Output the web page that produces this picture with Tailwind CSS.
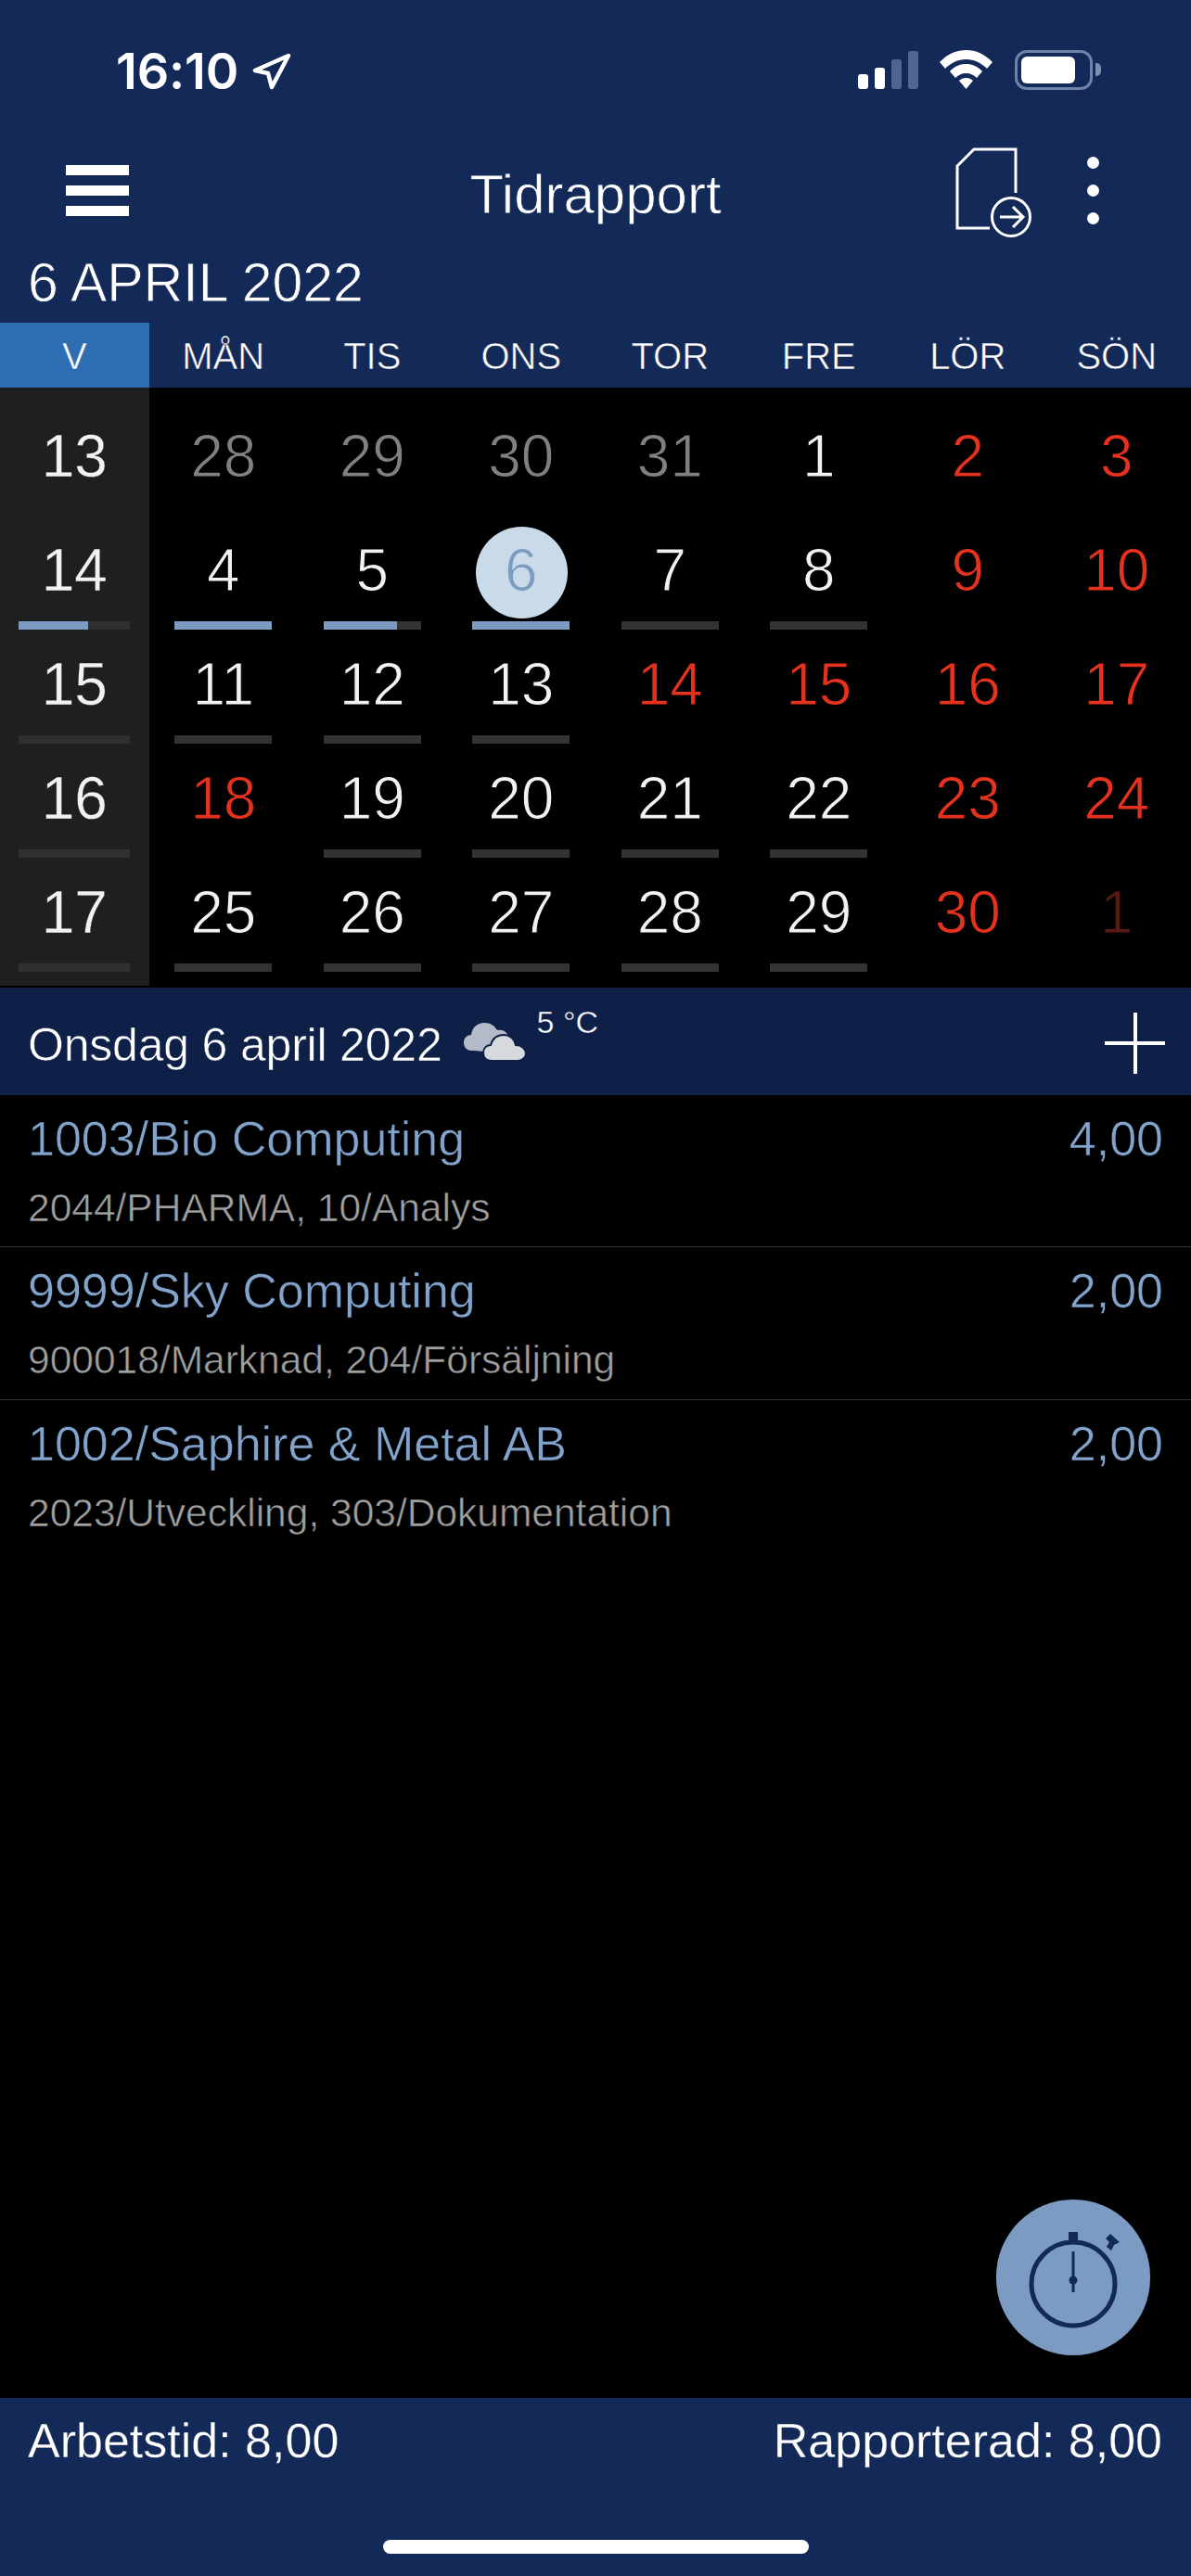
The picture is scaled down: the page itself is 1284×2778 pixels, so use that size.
<!DOCTYPE html>
<html lang="sv">
<head>
  <meta charset="UTF-8" />
  <title>Tidrapport</title>
  <meta name="viewport" content="width=device-width, initial-scale=1.0" />
  <script src="https://cdn.jsdelivr.net/npm/@tailwindcss/browser@4"></script>
</head>
<body class="bg-black text-white font-['Liberation_Sans',sans-serif]">
<div class="w-[1284px] h-[2778px] flex flex-col overflow-hidden">

  <!-- status bar -->
  <div class="bg-[#132958] h-[152px] flex items-start pt-[47px]">
    <span class="ml-[125px] w-[133px] font-['Inter',sans-serif] font-semibold text-[54px] leading-[60px] tracking-[-0.2px] whitespace-nowrap">16:10</span>
    <svg class="ml-[14px] mt-[10px] w-[42px] h-[40px]" viewBox="0 0 42 40" fill="none" stroke="#fff" stroke-width="4.5" stroke-linejoin="round"><path d="M39 3 L3 19 L17 22 L21 37 Z"/></svg>
    <div class="ml-auto mt-[8px] flex items-end gap-[7px] h-[41px]">
      <div class="w-[11px] h-[16px] rounded-[3px] bg-white"></div>
      <div class="w-[11px] h-[23px] rounded-[3px] bg-white"></div>
      <div class="w-[11px] h-[32px] rounded-[3px] bg-[#4f6790]"></div>
      <div class="w-[11px] h-[41px] rounded-[3px] bg-[#4f6790]"></div>
    </div>
    <svg class="ml-[23px] mt-[7px] w-[57px] h-[42px]" viewBox="0 0 57 42" fill="#fff"><path d="M28.500 0 C39 0 49 4.500 57 13 L51 20 C45 14 37.500 10 28.500 10 C19.500 10 12 14 6 20 L0 13 C8 4.500 18 0 28.500 0 Z"/><path d="M28.500 15 C35 15 41 17.500 46 23 L40 30 C37 27 33.500 25 28.500 25 C23.500 25 20 27 17 30 L11 23 C16 17.500 22 15 28.500 15 Z"/><path d="M28.500 30 C31.500 30 34 31 36 33 L28.500 42 L21 33 C23 31 25.500 30 28.500 30 Z"/></svg>
    <div class="ml-[24px] mt-[7px] w-[84px] h-[43px] rounded-[13px] border-[3px] border-[#6f83a6] p-[4px]">
      <div class="w-[58px] h-[29px] rounded-[6px] bg-white"></div>
    </div>
    <div class="ml-[3px] mr-[97px] mt-[21px] w-[6px] h-[14px] rounded-r-[5px] bg-[#7d90b0]"></div>
  </div>

  <!-- toolbar -->
  <div class="bg-[#132958] h-[116px] grid grid-cols-[1fr_auto_1fr]">
    <div class="pl-[71px] pt-[26px] flex flex-col gap-[11px]">
      <div class="w-[68px] h-[11px] bg-white"></div>
      <div class="w-[68px] h-[11px] bg-white"></div>
      <div class="w-[68px] h-[11px] bg-white"></div>
    </div>
    <div class="text-[60px] leading-[70px] pt-[23px] [-webkit-text-stroke:0.8px_#132958]">Tidrapport</div>
    <div class="flex justify-end">
      <svg class="mt-[7px] w-[84px] h-[98px]" viewBox="0 0 84 98" fill="none" stroke="#fff" stroke-width="3"><path d="M65 49 V2 H20 L2 20 V87 H37"/><circle cx="60" cy="75" r="20.500"/><path d="M48 75 H72 M62 64 L73 75 L62 86"/></svg>
      <div class="ml-[58px] mr-[99px] mt-[17px] flex flex-col gap-[17px]">
        <div class="w-[13px] h-[13px] rounded-full bg-white"></div>
        <div class="w-[13px] h-[13px] rounded-full bg-white"></div>
        <div class="w-[13px] h-[13px] rounded-full bg-white"></div>
      </div>
    </div>
  </div>

  <!-- month -->
  <div class="bg-[#132958] h-[80px] pl-[30px] text-[59px] leading-[70px] pt-[2px] [-webkit-text-stroke:0.8px_#132958]">6 APRIL 2022</div>

  <!-- weekdays -->
  <div class="bg-[#132958] h-[70px] grid grid-cols-8 text-center text-[40px] leading-[72px] [-webkit-text-stroke:0.6px_#132958]">
    <div class="bg-[#2e6db4] [-webkit-text-stroke:0.6px_#2e6db4]">V</div>
    <div>MÅN</div><div>TIS</div><div>ONS</div><div>TOR</div><div>FRE</div><div>LÖR</div><div>SÖN</div>
  </div>

  <!-- calendar -->
  <div class="h-[645px] grid grid-cols-8 text-[64px] leading-[88px] text-center text-[#f0f2f4]">
    <div class="bg-[#1e2020] pt-[30px] [-webkit-text-stroke:0.4px_#1e2020]">
      <div class="h-[123px]">13</div>
      <div class="h-[123px]">14<div class="mt-[11px] mx-auto w-[120px] h-[9px] bg-[#2f3030]"><div class="w-[75px] h-full bg-[#7b9bc2]"></div></div></div>
      <div class="h-[123px]">15<div class="mt-[11px] mx-auto w-[120px] h-[9px] bg-[#2f3030]"></div></div>
      <div class="h-[123px]">16<div class="mt-[11px] mx-auto w-[120px] h-[9px] bg-[#2f3030]"></div></div>
      <div class="h-[123px]">17<div class="mt-[11px] mx-auto w-[120px] h-[9px] bg-[#2f3030]"></div></div>
    </div>
    <div class="col-span-7 pt-[30px] grid grid-cols-7 auto-rows-[123px] [-webkit-text-stroke:1.1px_#000]">
      <div class="text-[#808080]">28</div>
      <div class="text-[#808080]">29</div>
      <div class="text-[#808080]">30</div>
      <div class="text-[#808080]">31</div>
      <div>1</div>
      <div class="text-[#e5321f]">2</div>
      <div class="text-[#e5321f]">3</div>

      <div>4<div class="mt-[11px] mx-auto w-[105px] h-[9px] bg-[#7b9bc2]"></div></div>
      <div>5<div class="mt-[11px] mx-auto w-[105px] h-[9px] bg-[#333]"><div class="w-[79px] h-full bg-[#7b9bc2]"></div></div></div>
      <div class="relative text-[#7b9bc2] [-webkit-text-stroke:1.1px_#c9dae9]">
        <div class="absolute left-[31px] -top-[3px] w-[99px] h-[99px] rounded-full bg-[#c9dae9]"></div>
        <span class="relative">6</span>
        <div class="relative mt-[11px] mx-auto w-[105px] h-[9px] bg-[#7b9bc2]"></div>
      </div>
      <div>7<div class="mt-[11px] mx-auto w-[105px] h-[9px] bg-[#333]"></div></div>
      <div>8<div class="mt-[11px] mx-auto w-[105px] h-[9px] bg-[#333]"></div></div>
      <div class="text-[#e5321f]">9</div>
      <div class="text-[#e5321f]">10</div>

      <div>11<div class="mt-[11px] mx-auto w-[105px] h-[9px] bg-[#333]"></div></div>
      <div>12<div class="mt-[11px] mx-auto w-[105px] h-[9px] bg-[#333]"></div></div>
      <div>13<div class="mt-[11px] mx-auto w-[105px] h-[9px] bg-[#333]"></div></div>
      <div class="text-[#e5321f]">14</div>
      <div class="text-[#e5321f]">15</div>
      <div class="text-[#e5321f]">16</div>
      <div class="text-[#e5321f]">17</div>

      <div class="text-[#e5321f]">18</div>
      <div>19<div class="mt-[11px] mx-auto w-[105px] h-[9px] bg-[#333]"></div></div>
      <div>20<div class="mt-[11px] mx-auto w-[105px] h-[9px] bg-[#333]"></div></div>
      <div>21<div class="mt-[11px] mx-auto w-[105px] h-[9px] bg-[#333]"></div></div>
      <div>22<div class="mt-[11px] mx-auto w-[105px] h-[9px] bg-[#333]"></div></div>
      <div class="text-[#e5321f]">23</div>
      <div class="text-[#e5321f]">24</div>

      <div>25<div class="mt-[11px] mx-auto w-[105px] h-[9px] bg-[#333]"></div></div>
      <div>26<div class="mt-[11px] mx-auto w-[105px] h-[9px] bg-[#333]"></div></div>
      <div>27<div class="mt-[11px] mx-auto w-[105px] h-[9px] bg-[#333]"></div></div>
      <div>28<div class="mt-[11px] mx-auto w-[105px] h-[9px] bg-[#333]"></div></div>
      <div>29<div class="mt-[11px] mx-auto w-[105px] h-[9px] bg-[#333]"></div></div>
      <div class="text-[#e5321f]">30</div>
      <div class="text-[#5a1a14]">1</div>
    </div>
  </div>

  <!-- selected day -->
  <div class="mt-[2px] h-[116px] bg-[#0e2048] flex items-start">
    <span class="ml-[30px] mt-[32px] text-[50px] leading-[60px] tracking-[-0.2px] [-webkit-text-stroke:0.6px_#0e2048]">Onsdag 6 april 2022</span>
    <svg class="ml-[23px] mt-[37px] w-[67px] h-[42px]" viewBox="0 0 67 42"><path fill="#b4bac7" d="M8 31 C3 31 0 27 0 22 C0 17 4 14 8 14 C9 6 15 1 22 1 C29 1 33 4 36 9 C43 8 47 11 48 17 L30 36 C26 32 16 31 8 31 Z"/><path fill="#d6d9dd" stroke="#0e2048" stroke-width="2" d="M30 42 C24 42 21 38 21 33 C21 28 25 25 29 25 C31 18 36 14 43 14 C50 14 55 19 56 25 C62 25 67 29 67 34 C67 39 62 42 58 42 Z"/></svg>
    <span class="ml-[12px] mt-[17px] text-[34px] leading-[40px] [-webkit-text-stroke:0.4px_#0e2048]">5 °C</span>
    <div class="ml-auto mr-[28px] mt-[27px] w-[65px] h-[66px] relative">
      <div class="absolute left-0 right-0 top-[31px] h-[4px] bg-white"></div>
      <div class="absolute top-0 bottom-0 left-[31px] w-[4px] bg-white"></div>
    </div>
  </div>

  <!-- entries -->
  <div class="flex-1 relative [-webkit-text-stroke:0.6px_#000]">
    <div class="h-[164px] border-b border-[#333] px-[30px] pt-[17px]">
      <div class="flex justify-between text-[52px] leading-[60px] text-[#82a3cc]"><span>1003/Bio Computing</span><span>4,00</span></div>
      <div class="mt-[21px] text-[42.500px] leading-[48px] text-[#a0a0a0]">2044/PHARMA, 10/Analys</div>
    </div>
    <div class="h-[165px] border-b border-[#333] px-[30px] pt-[17px]">
      <div class="flex justify-between text-[52px] leading-[60px] text-[#82a3cc]"><span>9999/Sky Computing</span><span>2,00</span></div>
      <div class="mt-[21px] text-[42.500px] leading-[48px] text-[#a0a0a0]">900018/Marknad, 204/Försäljning</div>
    </div>
    <div class="h-[165px] px-[30px] pt-[17px]">
      <div class="flex justify-between text-[52px] leading-[60px] text-[#82a3cc]"><span>1002/Saphire &amp; Metal AB</span><span>2,00</span></div>
      <div class="mt-[21px] text-[42.500px] leading-[48px] text-[#a0a0a0]">2023/Utveckling, 303/Dokumentation</div>
    </div>

    <!-- stopwatch button -->
    <div class="absolute left-[1074px] top-[1191px] w-[166px] h-[168px] rounded-full bg-[#7b9bc2] flex items-center justify-center">
      <svg class="w-[104px] h-[112px]" viewBox="0 0 104 112" fill="#132958"><circle cx="52" cy="63" r="45" fill="none" stroke="#132958" stroke-width="5"/><rect x="47" y="7" width="10" height="10"/><path d="M92 9 L102 18 L96 21 L93 27 L88 23 L91 18 L87 14 Z"/><rect x="50.500" y="28" width="3" height="44"/><circle cx="52" cy="59" r="4.500"/></svg>
    </div>
  </div>

  <!-- footer -->
  <div class="h-[192px] bg-[#132958] pt-[16px]">
    <div class="flex justify-between pl-[30px] pr-[31px] text-[52px] leading-[60px] [-webkit-text-stroke:0.3px_#132958]"><span>Arbetstid: 8,00</span><span>Rapporterad: 8,00</span></div>
    <div class="mt-[77px] mx-auto w-[459px] h-[15px] rounded-full bg-white"></div>
  </div>
</div>
</body>
</html>
